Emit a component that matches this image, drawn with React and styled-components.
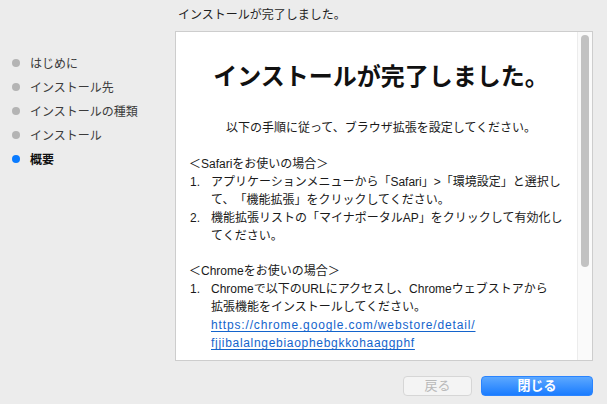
import React from "react";
import styled, { createGlobalStyle } from "styled-components";

const Global = createGlobalStyle`
  html, body { margin: 0; padding: 0; background: #ececec; }
  body {
    font-family: "Liberation Sans", "Noto Sans CJK JP", sans-serif;
    color: #222;
    text-spacing-trim: space-all;
    -webkit-font-smoothing: antialiased;
  }
`;

const Window = styled.div`
  width: 607px;
  height: 404px;
  display: grid;
  grid-template-columns: 175px 418px 14px;
  grid-template-rows: 31px 330px 1fr;
  background: #ececec;
`;

const Title = styled.div`
  grid-column: 2;
  grid-row: 1;
  font-size: 12px;
  padding-left: 3px;
  color: #1e1e1e;
  padding-bottom: 4px;
  box-sizing: border-box;
  display: flex;
  align-items: center;
`;

const Sidebar = styled.ul`
  grid-column: 1;
  grid-row: 2;
  list-style: none;
  margin: 0;
  padding: 19px 0 0 0;
  display: flex;
  flex-direction: column;
`;

const Step = styled.li`
  height: 24px;
  display: flex;
  align-items: center;
  font-size: 12px;
  color: ${(p) => (p.$active ? "#111" : "#3b3b3b")};
  font-weight: ${(p) => (p.$active ? 700 : 400)};
`;

const Dot = styled.span`
  width: 8px;
  height: 8px;
  border-radius: 50%;
  margin: 1px 10px 0 12px;
  background: ${(p) => (p.$active ? "#0a7bff" : "#b4b4b4")};
  flex: none;
`;

const Panel = styled.div`
  grid-column: 2;
  grid-row: 2;
  background: #fff;
  border: 1px solid #cdcdcd;
  display: flex;
  overflow: hidden;
`;

const Content = styled.div`
  flex: 1;
  overflow: hidden;
  padding: 30px 4px 0 13px;
  font-size: 12px;
  line-height: 18px;
  color: #1a1a1a;
`;

const Heading = styled.h1`
  margin: 0;
  font-size: 24px;
  line-height: 30px;
  font-weight: 700;
  text-align: center;
  color: #111;
`;

const Intro = styled.p`
  margin: 27px 0 18px;
  text-align: center;
`;

const Section = styled.div`
  margin-bottom: 17px;
`;

const Line = styled.div`
  white-space: nowrap;
`;

const Item = styled.div`
  display: grid;
  grid-template-columns: 21px 1fr;
  padding-left: 1px;
`;

const Link = styled.a`
  color: #1464cc;
  text-decoration: underline;
  text-underline-offset: 2px;
  white-space: nowrap;
  letter-spacing: ${(p) => p.$ls}px;
`;

const Track = styled.div`
  width: 14px;
  border-left: 1px solid #ececec;
  background: #fafafa;
  display: flex;
  justify-content: center;
  padding-top: 3px;
  flex: none;
`;

const Thumb = styled.div`
  width: 8px;
  height: 232px;
  border-radius: 4px;
  background: #c2c2c2;
`;

const Footer = styled.div`
  grid-column: 2;
  grid-row: 3;
  display: flex;
  justify-content: flex-end;
  align-items: flex-start;
  gap: 9px;
  padding-top: 15px;
`;

const Button = styled.button`
  height: 20px;
  width: ${(p) => p.$w}px;
  border-radius: 4px;
  font-family: inherit;
  font-size: 13px;
  line-height: 18px;
  padding: 0;
  border: 1px solid ${(p) => (p.$primary ? "#2a84ff" : "#d6d6d6")};
  color: ${(p) => (p.$primary ? "#fff" : "#b9b9b9")};
  background: ${(p) =>
    p.$primary ? "linear-gradient(#5ca8ff, #1a7cff)" : "#f4f4f4"};
  font-weight: ${(p) => (p.$primary ? 700 : 400)};
`;

const steps = ["はじめに", "インストール先", "インストールの種類", "インストール", "概要"];

export default function App() {
  return (
    <>
      <Global />
      <Window>
        <Title>インストールが完了しました。</Title>
        <Sidebar>
          {steps.map((s, i) => (
            <Step key={s} $active={i === steps.length - 1}>
              <Dot $active={i === steps.length - 1} />
              {s}
            </Step>
          ))}
        </Sidebar>
        <Panel>
          <Content>
            <Heading>インストールが完了しました。</Heading>
            <Intro>以下の手順に従って、ブラウザ拡張を設定してください。</Intro>
            <Section>
              <Line>＜Safariをお使いの場合＞</Line>
              <Item>
                <span>1.</span>
                <div>
                  <Line>アプリケーションメニューから「Safari」&gt;「環境設定」と選択し</Line>
                  <Line>て、「機能拡張」をクリックしてください。</Line>
                </div>
              </Item>
              <Item>
                <span>2.</span>
                <div>
                  <Line>機能拡張リストの「マイナポータルAP」をクリックして有効化し</Line>
                  <Line>てください。</Line>
                </div>
              </Item>
            </Section>
            <Section>
              <Line>＜Chromeをお使いの場合＞</Line>
              <Item>
                <span>1.</span>
                <div>
                  <Line>Chromeで以下のURLにアクセスし、Chromeウェブストアから</Line>
                  <Line>拡張機能をインストールしてください。</Line>
                  <Line>
                    <Link href="#" $ls={0.85}>https://chrome.google.com/webstore/detail/</Link>
                  </Line>
                  <Line>
                    <Link href="#" $ls={0.7}>fjjibalalngebiaophebgkkohaaggphf</Link>
                  </Line>
                </div>
              </Item>
            </Section>
          </Content>
          <Track>
            <Thumb />
          </Track>
        </Panel>
        <Footer>
          <Button $w={69} disabled>戻る</Button>
          <Button $w={112} $primary>閉じる</Button>
        </Footer>
      </Window>
    </>
  );
}
